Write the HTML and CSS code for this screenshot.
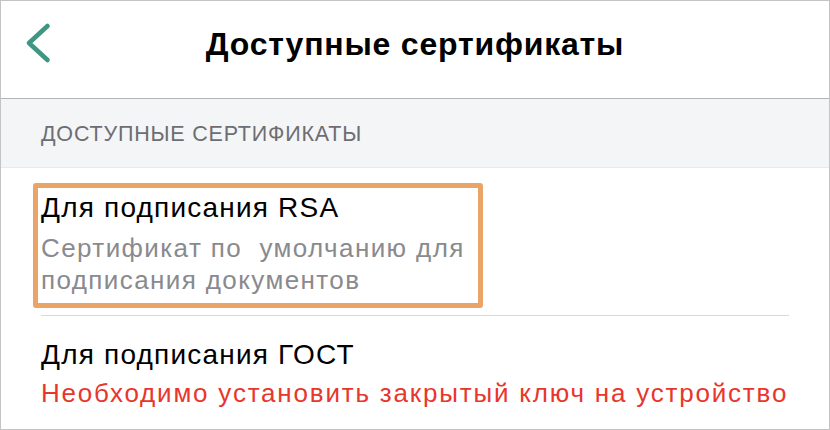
FILE: index.html
```html
<!DOCTYPE html>
<html lang="ru">
<head>
<meta charset="utf-8">
<title>Доступные сертификаты</title>
<link rel="stylesheet" href="styles.css">
</head>
<body>
<div class="frame">
  <header class="navbar">
    <div class="nav-left">
      <svg class="back" width="30" height="44" viewBox="0 0 30 44" aria-hidden="true">
        <polyline points="23.5,5 5,22 23.5,39" fill="none" stroke="#3f9683" stroke-width="4.6" stroke-linecap="round" stroke-linejoin="round"/>
      </svg>
    </div>
    <h1 class="nav-title">Доступные сертификаты</h1>
    <div class="nav-right"></div>
  </header>
  <div class="section-header">ДОСТУПНЫЕ СЕРТИФИКАТЫ</div>
  <div class="row row-first">
    <div class="highlight">
      <div class="row-title">Для подписания RSA</div>
      <div class="row-sub">Сертификат по&nbsp; умолчанию для<br>подписания документов</div>
    </div>
    <div class="separator"></div>
  </div>
  <div class="row row-second">
    <div class="row-title">Для подписания ГОСТ</div>
    <div class="row-sub error">Необходимо установить закрытый ключ на устройство</div>
  </div>
</div>
</body>
</html>
```
FILE: styles.css
```css
* { box-sizing: border-box; }
html, body { margin: 0; padding: 0; background: #ffffff; }
body { font-family: "Liberation Sans", Arial, sans-serif; }

.frame {
  width: 830px;
  height: 430px;
  border: 1px solid #c4c4c4;
  background: #ffffff;
  overflow: hidden;
}

.navbar {
  height: 98px;
  border-bottom: 1px solid #b4b4b4;
  display: grid;
  grid-template-columns: 1fr auto 1fr;
  align-items: start;
  padding-top: 23px;
}
.nav-left { padding-left: 23px; }
.back { display: block; margin-top: -3px; }
.nav-title {
  margin: 0;
  font-size: 32px;
  line-height: 40px;
  font-weight: 700;
  color: #000000;
  letter-spacing: 0.8px;
}

.section-header {
  height: 69px;
  background: #f4f5f7;
  border-bottom: 1px solid #e9eaec;
  padding: 22px 0 0 40px;
  font-size: 21.5px;
  line-height: 26px;
  color: #6d6d72;
  letter-spacing: 0.8px;
}

.row-first { padding: 15px 0 0 0; }
.highlight {
  margin-left: 32px;
  width: 450px;
  height: 125px;
  border: 5px solid #e9a466;
  border-radius: 3px;
  padding: 3px 0 0 3px;
}
.row-title {
  font-size: 28px;
  line-height: 34px;
  color: #000000;
  letter-spacing: 1.2px;
}
.row-sub {
  margin-top: 7px;
  font-size: 26px;
  line-height: 32px;
  color: #8a8a8e;
  letter-spacing: 1.4px;
}
.separator {
  margin: 7px 40px 0 40px;
  height: 1px;
  background: #d9d9d9;
}

.row-second { padding: 22px 0 0 40px; }
.row-second .row-sub { margin-top: 5px; letter-spacing: 1.8px; }
.error { color: #e8362c; }
```
